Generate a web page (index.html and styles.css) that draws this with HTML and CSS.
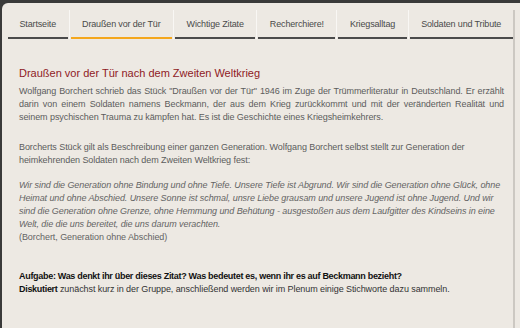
FILE: index.html
```html
<!DOCTYPE html>
<html lang="de">
<head>
    <meta charset="UTF-8">
    <title>Draußen vor der Tür</title>
    <link rel="stylesheet" href="styles.css">
</head>
<body>
    <div class="page">
        <div class="main">
            <ul class="tabs">
                <li><a href="#">Startseite</a></li>
                <li class="active"><a href="#">Draußen vor der Tür</a></li>
                <li><a href="#">Wichtige Zitate</a></li>
                <li><a href="#">Recherchiere!</a></li>
                <li><a href="#">Kriegsalltag</a></li>
                <li><a href="#">Soldaten und Tribute</a></li>
            </ul>
            <div class="content">
                <h1>Draußen vor der Tür nach dem Zweiten Weltkrieg</h1>
                <p class="intro">Wolfgang Borchert schrieb das Stück "Draußen vor der Tür" 1946 im Zuge der Trümmerliteratur in Deutschland. Er erzählt darin von einem Soldaten namens Beckmann, der aus dem Krieg zurückkommt und mit der veränderten Realität und seinem psychischen Trauma zu kämpfen hat. Es ist die Geschichte eines Kriegsheimkehrers.</p>
                <p>Borcherts Stück gilt als Beschreibung einer ganzen Generation. Wolfgang Borchert selbst stellt zur Generation der heimkehrenden Soldaten nach dem Zweiten Weltkrieg fest:</p>
                <p class="quote"><em>Wir sind die Generation ohne Bindung und ohne Tiefe. Unsere Tiefe ist Abgrund. Wir sind die Generation ohne Glück, ohne Heimat und ohne Abschied. Unsere Sonne ist schmal, unsre Liebe grausam und unsere Jugend ist ohne Jugend. Und wir sind die Generation ohne Grenze, ohne Hemmung und Behütung - ausgestoßen aus dem Laufgitter des Kindseins in eine Welt, die die uns bereitet, die uns darum verachten.</em><br>(Borchert, Generation ohne Abschied)</p>
                <p class="task"><strong>Aufgabe: Was denkt ihr über dieses Zitat? Was bedeutet es, wenn ihr es auf Beckmann bezieht?</strong><br><strong>Diskutiert</strong> zunächst kurz in der Gruppe, anschließend werden wir im Plenum einige Stichworte dazu sammeln.</p>
            </div>
        </div>
        <div class="edge"></div>
    </div>
</body>
</html>
```

FILE: styles.css
```css
/* Seite */
body {
    margin: 0;
    padding: 3px 0 0 2px;
    background-color: #3a3a3a;
    font-family: "Liberation Sans", Arial, sans-serif;
    height: 328px;
    box-sizing: border-box;
    overflow: hidden;
}
.page {
    display: flex;
    height: 325px;
    background-color: #ede9e3;
    border-top-left-radius: 6px;
}
.main {
    flex: 1;
    min-width: 0;
}
.edge {
    width: 2px;
    margin: 7px 5px 0 0;
    background-color: #ccc8c2;
}

/* Reiter */
.tabs {
    display: flex;
    list-style: none;
    margin: 7px 0 0 6px;
    padding: 0;
}
.tabs li {
    display: flex;
    padding-right: 1px;
    margin-right: 1px;
    border-right: 1px solid #f9f7f4;
}
.tabs li:last-child {
    border-right: none;
    margin-right: 0;
    padding-right: 0;
    flex: 1;
}
.tabs a {
    display: block;
    flex: 1;
    padding: 0 11.5px;
    height: 27px;
    line-height: 28px;
    font-size: 9px;
    letter-spacing: -0.15px;
    white-space: nowrap;
    color: #4a4a4a;
    text-align: center;
    text-decoration: none;
    border-bottom: 2px solid #4b4b4b;
}
.tabs li:last-child a {
    text-align: left;
}
.tabs li.active a {
    border-bottom-color: #f4a71d;
}

/* Inhalt */
.content {
    padding: 0 9px 0 17px;
}
h1 {
    margin: 27px 0 5px;
    font-size: 11px;
    font-weight: normal;
    line-height: 14px;
    color: #8f1a1f;
}
p {
    margin: 0 0 12px;
    font-size: 9px;
    letter-spacing: -0.08px;
    line-height: 13px;
    color: #5c5c5c;
}
p.intro {
    margin-bottom: 17px;
    text-align: justify;
}
p.quote {
    color: #646464;
    margin-bottom: 26px;
}
p.task {
    color: #333;
}
p.task strong {
    color: #111;
    letter-spacing: -0.3px;
}
```
